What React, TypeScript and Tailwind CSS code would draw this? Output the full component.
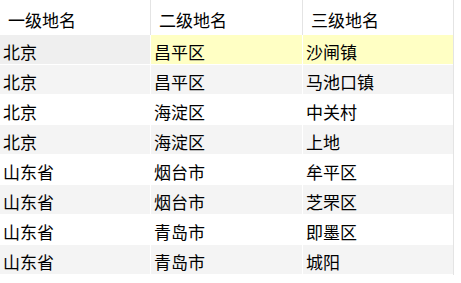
import React from 'react'

const rows = [
  ['北京', '昌平区', '沙闸镇'],
  ['北京', '昌平区', '马池口镇'],
  ['北京', '海淀区', '中关村'],
  ['北京', '海淀区', '上地'],
  ['山东省', '烟台市', '牟平区'],
  ['山东省', '烟台市', '芝罘区'],
  ['山东省', '青岛市', '即墨区'],
  ['山东省', '青岛市', '城阳'],
]

const headers = ['一级地名', '二级地名', '三级地名']

const App = () => {
  return (
    <div
      className="w-[461px] h-[283px] bg-white text-[17px] text-black"
      style={{ fontFamily: '"Noto Sans CJK SC", "Noto Sans", sans-serif' }}
    >
      <div className="w-[454px] border-r border-[#e4e4e4]">
        <div className="grid grid-cols-[151px_152px_150px] h-[35px]">
          {headers.map((h, i) => (
            <div
              key={h}
              className={`flex items-center pl-[8px] pt-[4px] leading-none ${i < 2 ? 'border-r border-[#e4e4e4]' : ''}`}
            >
              {h}
            </div>
          ))}
        </div>
        {rows.map((r, ri) => (
          <div
            key={ri}
            className={`grid grid-cols-[151px_152px_150px] h-[30px] border-b border-white ${ri % 2 === 1 ? 'bg-[#f4f4f4]' : 'bg-white'}`}
          >
            {r.map((c, ci) => {
              let bg = ''
              if (ri === 0) bg = ci === 0 ? 'bg-[#efefef]' : 'bg-[#ffffc4]'
              return (
                <div
                  key={ci}
                  className={`flex items-center pl-[3px] pt-[4px] leading-none ${ci < 2 ? 'border-r border-white' : ''} ${bg}`}
                >
                  {c}
                </div>
              )
            })}
          </div>
        ))}
      </div>
    </div>
  )
}

export default App
